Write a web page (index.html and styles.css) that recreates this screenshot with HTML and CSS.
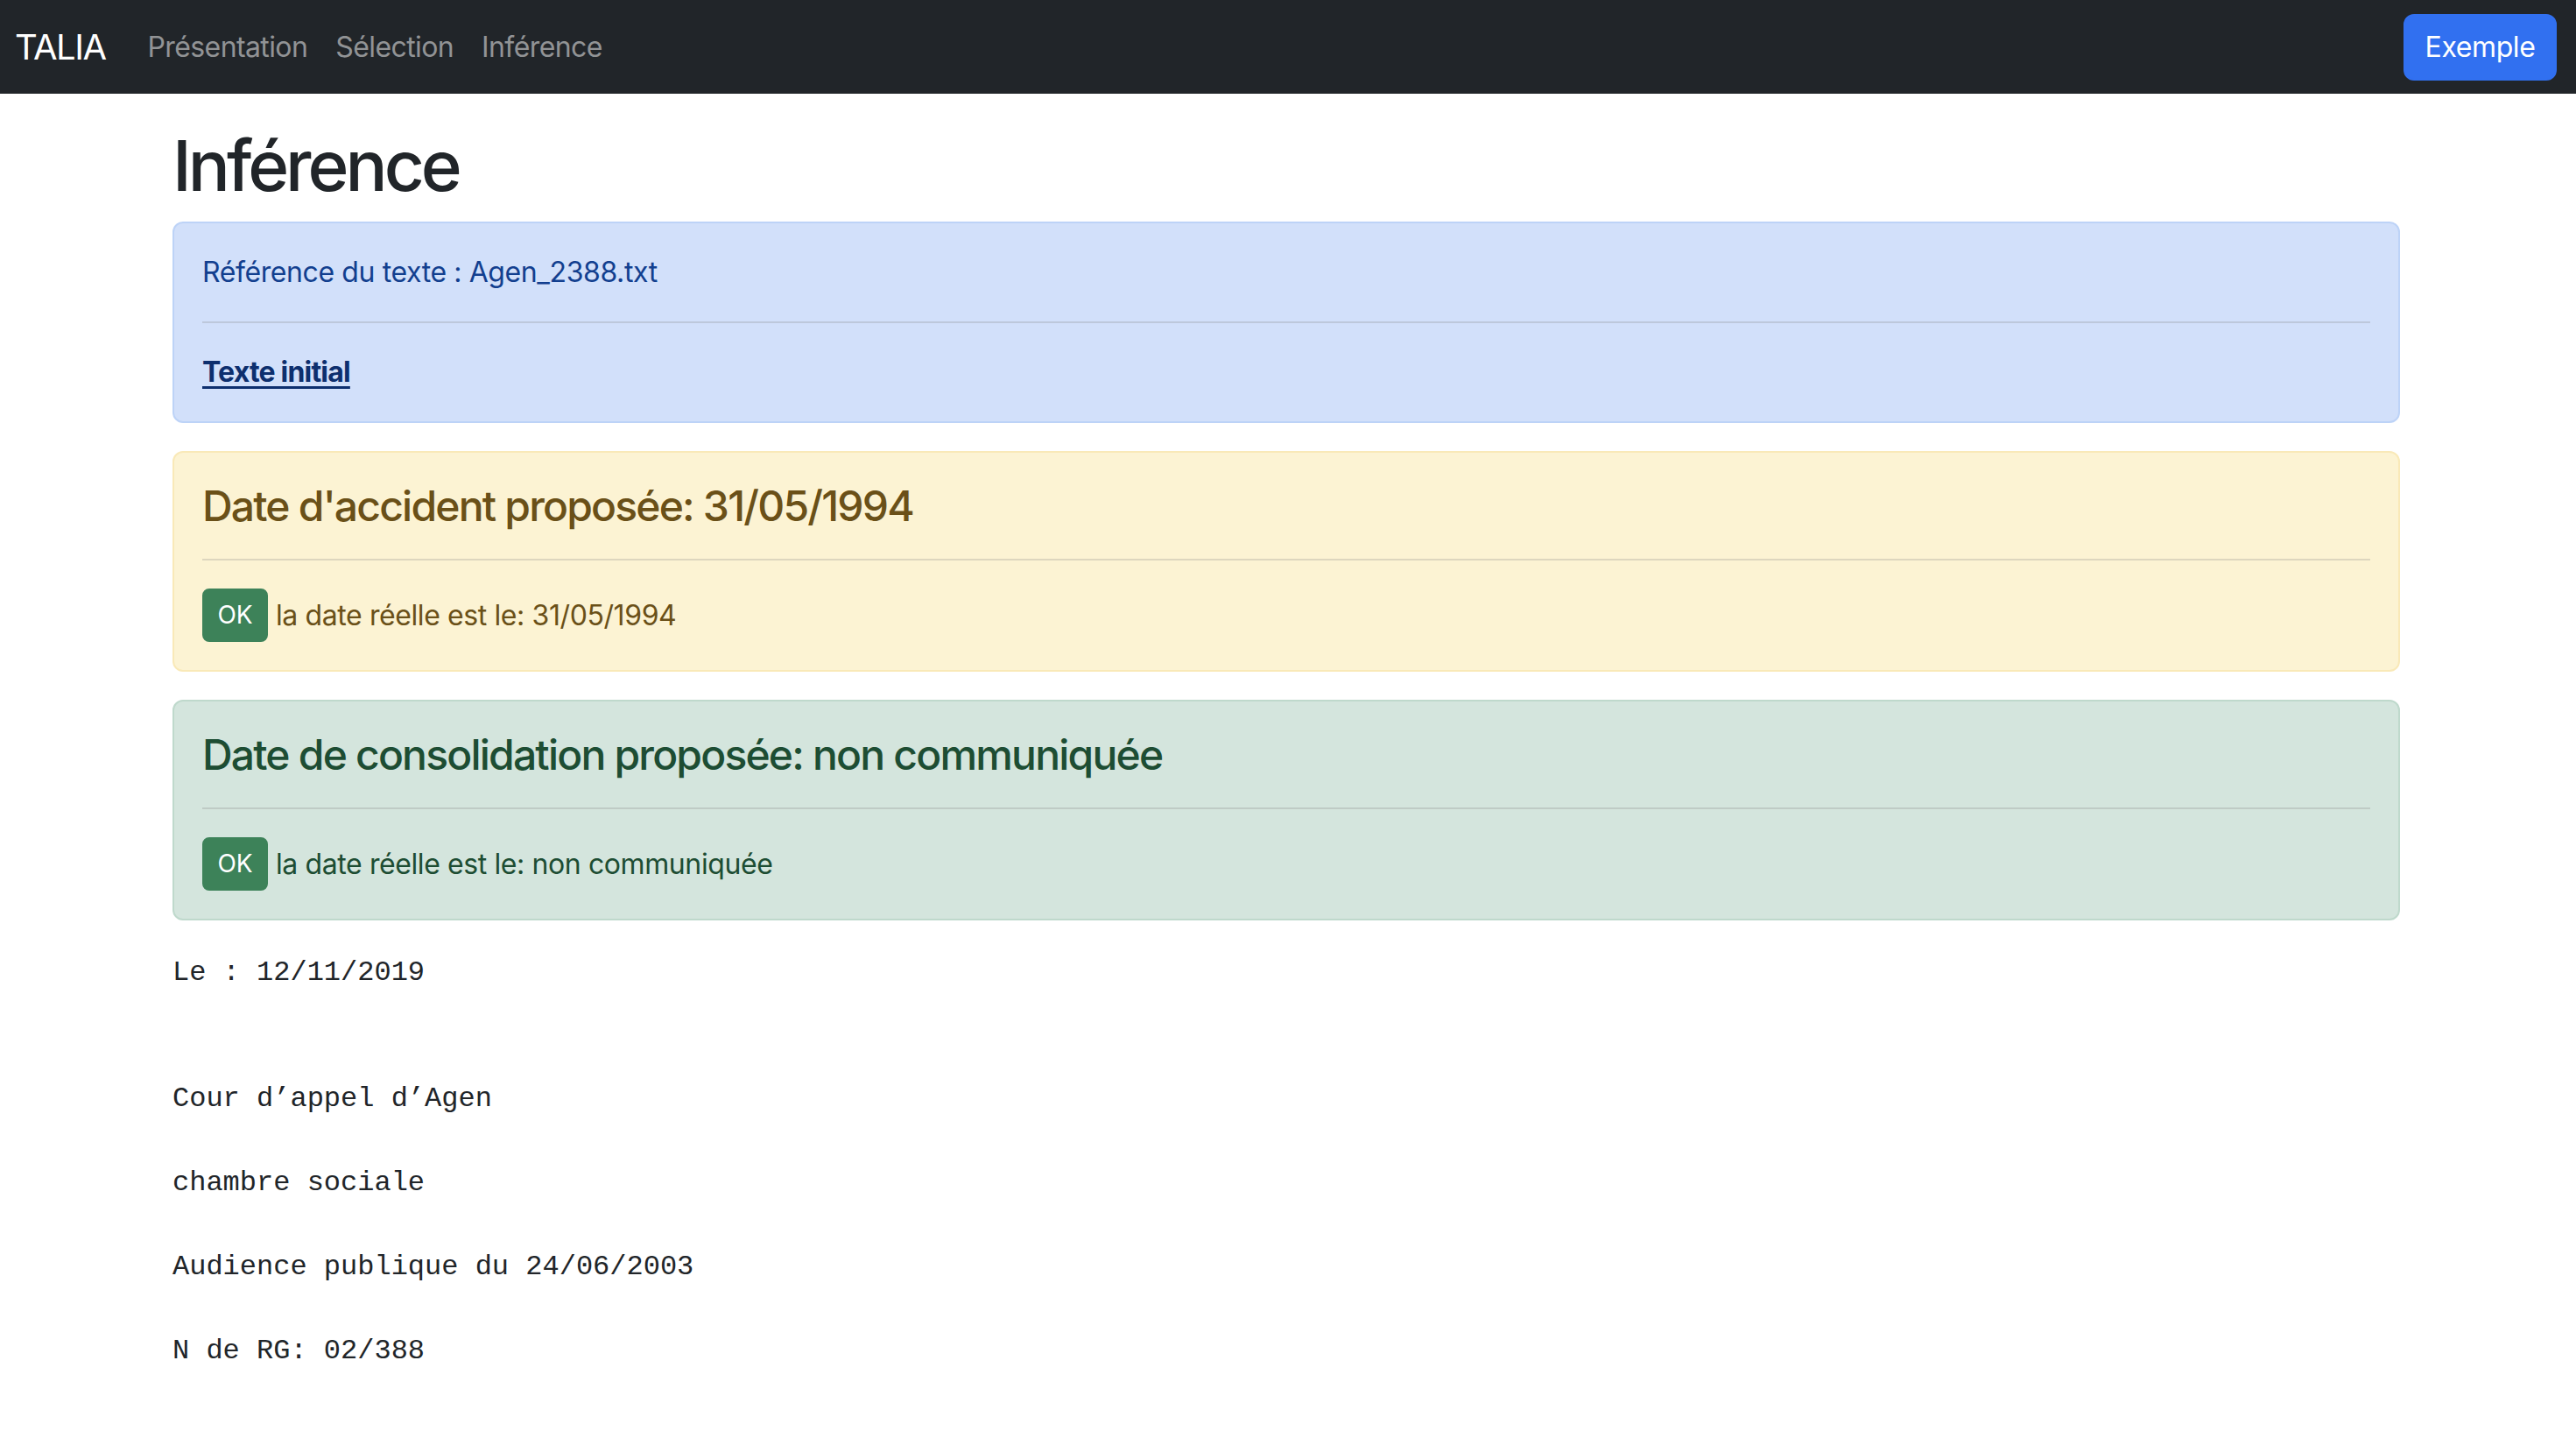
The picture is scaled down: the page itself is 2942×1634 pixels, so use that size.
FILE: index.html
```html
<!DOCTYPE html>
<html lang="fr">
<head>
<meta charset="utf-8">
<title>TALIA - Inférence</title>
<link rel="stylesheet" href="styles.css">
</head>
<body>
<nav class="navbar">
  <div class="nav-left">
    <a class="brand" href="#">TALIA</a>
    <ul class="nav-links">
      <li><a class="nav-link" href="#">Présentation</a></li>
      <li><a class="nav-link" href="#">Sélection</a></li>
      <li><a class="nav-link" href="#">Inférence</a></li>
    </ul>
  </div>
  <a class="btn-primary" href="#">Exemple</a>
</nav>
<main class="container">
  <h1 class="title">Inférence</h1>
  <div class="alert alert-info">
    <p class="alert-line">Référence du texte : Agen_2388.txt</p>
    <hr class="rule">
    <a class="alert-link" href="#">Texte initial</a>
  </div>
  <div class="alert alert-warning">
    <h4 class="alert-heading">Date d'accident proposée: 31/05/1994</h4>
    <hr class="rule">
    <p class="alert-row"><span class="btn-ok">OK</span><span>la date réelle est le: 31/05/1994</span></p>
  </div>
  <div class="alert alert-success">
    <h4 class="alert-heading">Date de consolidation proposée: non communiquée</h4>
    <hr class="rule">
    <p class="alert-row"><span class="btn-ok">OK</span><span>la date réelle est le: non communiquée</span></p>
  </div>
  <div class="doc-text">Le : 12/11/2019


Cour d’appel d’Agen

chambre sociale

Audience publique du 24/06/2003

N de RG: 02/388

</div>
</main>
</body>
</html>
```

FILE: styles.css
```css
* { box-sizing: border-box; }
html, body {
  margin: 0;
  padding: 0;
  background: #fff;
}
body {
  font-family: Inter, "Noto Sans", "Liberation Sans", sans-serif;
  font-size: 32px;
  line-height: 1.5;
  color: #212529;
}
a { text-decoration: none; }

.navbar {
  height: 107px;
  background: #212529;
  display: flex;
  align-items: center;
  justify-content: space-between;
  padding: 0 22px 0 17px;
}
.nav-left {
  display: flex;
  align-items: center;
}
.brand {
  color: #fff;
  font-size: 40px;
  line-height: 60px;
  margin-right: 32px;
  letter-spacing: -1.5px;
}
.nav-links {
  display: flex;
  list-style: none;
  margin: 0;
  padding: 0;
}
.nav-link {
  display: block;
  padding: 0 16px;
  color: #919395;
  font-size: 32px;
  line-height: 48px;
  letter-spacing: -0.6px;
}
.btn-primary {
  display: inline-block;
  width: 175px;
  height: 76px;
  line-height: 72px;
  text-align: center;
  background: #3170f0;
  border: 2px solid #3170f0;
  color: #fff;
  border-radius: 12px;
  font-size: 32px;
  letter-spacing: -0.4px;
}

.container {
  width: 2544px;
  margin-left: 197px;
  padding-top: 34px;
}
.title {
  font-size: 80px;
  font-weight: 500;
  line-height: 96px;
  margin: 0 0 16px;
  letter-spacing: -4px;
}
.alert {
  border: 2px solid transparent;
  border-radius: 12px;
  padding: 32px;
  margin-bottom: 32px;
  letter-spacing: -0.4px;
}
.alert-info {
  background: #d2e0fa;
  border-color: #bdd3f7;
  color: #123f8f;
}
.alert-warning {
  background: #fcf3d3;
  border-color: #f9e9b8;
  color: #6a5018;
}
.alert-success {
  background: #d4e5dd;
  border-color: #bfd9cc;
  color: #1d4d33;
}
.alert-line {
  margin: 0;
  line-height: 48px;
}
.alert-row {
  margin: 0;
  display: flex;
  align-items: center;
  gap: 9px;
  line-height: 48px;
}
.alert-heading {
  font-size: 48px;
  font-weight: 500;
  line-height: 57px;
  margin: 0;
  letter-spacing: -1.8px;
}
.rule {
  margin: 32px 0;
  border: 0;
  border-top: 2px solid currentColor;
  opacity: 0.25;
  height: 0;
}
.alert-link {
  display: inline-block;
  color: #0d2f6e;
  font-weight: 700;
  text-decoration: underline;
  text-decoration-thickness: 3px;
  text-underline-offset: 5px;
  line-height: 48px;
  letter-spacing: -0.8px;
}
.btn-ok {
  flex: none;
  display: inline-block;
  width: 75px;
  height: 61px;
  line-height: 57px;
  text-align: center;
  background: #3d8259;
  border: 2px solid #3d8259;
  border-radius: 8px;
  color: #fff;
  font-size: 28px;
  letter-spacing: 0;
}
.doc-text {
  padding-top: 4px;
  white-space: pre-wrap;
  font-family: "Liberation Mono", "Courier New", monospace;
  font-size: 32px;
  line-height: 48px;
  color: #212529;
}
```
